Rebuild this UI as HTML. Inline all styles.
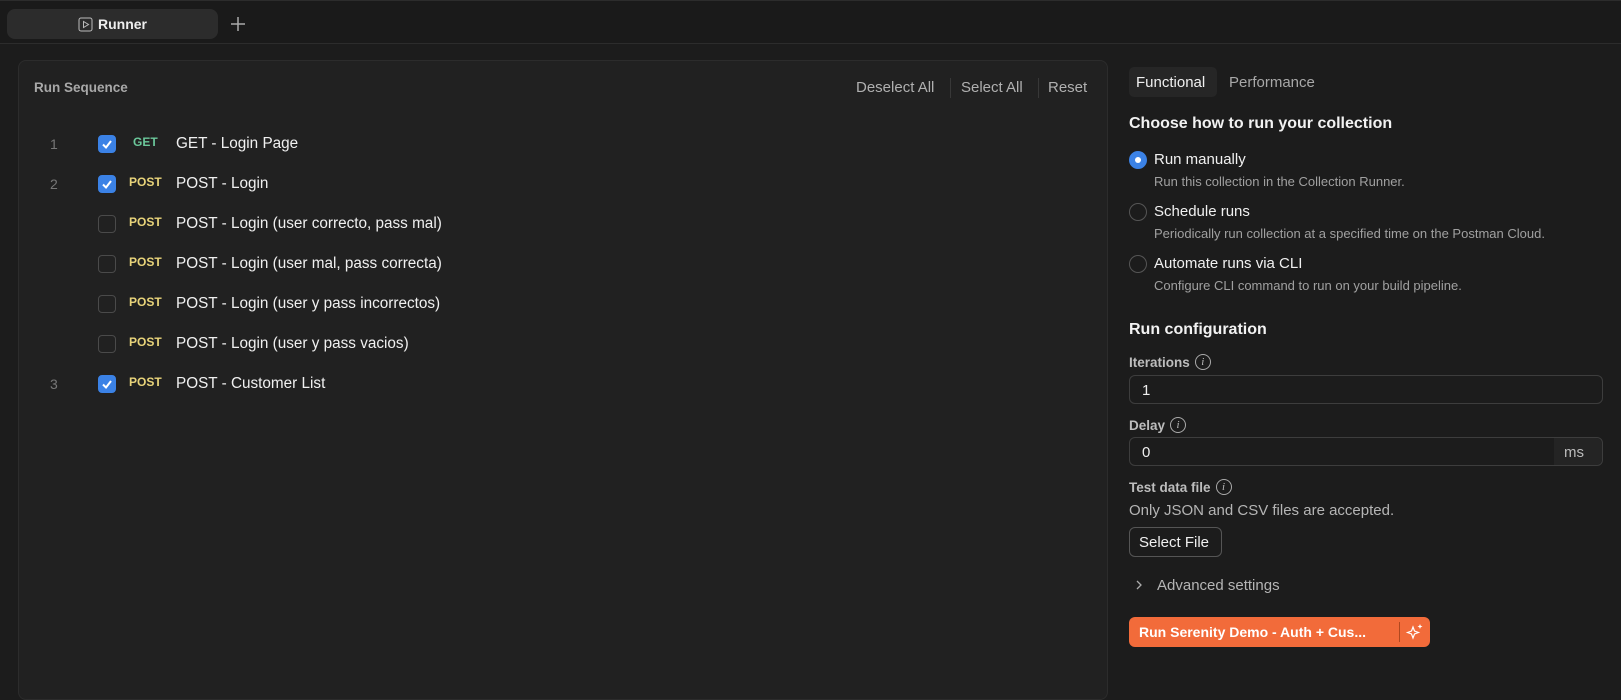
<!DOCTYPE html>
<html><head><meta charset="utf-8"><style>
*{box-sizing:border-box;margin:0;padding:0}
body{width:1621px;height:680px;background:#1c1c1c;font-family:"Liberation Sans",sans-serif;color:#e6e6e6;position:relative;overflow:hidden}
.abs{position:absolute;white-space:nowrap}
.top{position:absolute;left:0;top:0;width:1621px;height:44px;background:#1a1a1a;border-bottom:1px solid #2c2c2c;border-top:1px solid #2c2c2c}
.tab{position:absolute;left:7px;top:8px;width:211px;height:30px;background:#2c2c2c;border-radius:8px;font-size:14px;font-weight:bold;color:#eee;display:flex;align-items:center;justify-content:center;gap:5px}
.panel{position:absolute;left:18px;top:60px;width:1090px;height:640px;background:#212121;border:1px solid #2c2c2c;border-radius:8px}
.cb{position:absolute;left:98px;width:18px;height:18px;border-radius:4px;border:1px solid #4a4a4a}
.cb.on{background:#3b82e6;border-color:#3b82e6}
.m{position:absolute;left:129px;font-size:12px;font-weight:bold;color:#e9d47a}
.m.g{color:#6bc79a;left:133px}
.n{position:absolute;left:176px;font-size:15.3px;color:#f0f0f0}
.num{position:absolute;left:50px;font-size:14px;color:#777}
.rad{position:absolute;left:1129px;width:18px;height:18px;border-radius:50%;border:1px solid #555}
.rad.on{background:#3b82e6;border-color:#3b82e6}
.rad.on:after{content:"";position:absolute;left:5px;top:5px;width:6px;height:6px;border-radius:50%;background:#fff}
.rt{left:1154px;font-size:15px;color:#f0f0f0}
.rd{left:1154px;font-size:13px;color:#a0a0a0}
.lbl{left:1129px;font-size:13.5px;font-weight:bold;color:#bdbdbd;display:flex;align-items:center}
.inp{position:absolute;left:1129px;width:474px;height:29px;border:1px solid #3d3d3d;border-radius:6px;font-size:15px;padding:6px 12px;color:#eee}
.info{display:inline-block;width:16px;height:16px;border:1px solid #aaa;border-radius:50%;font-size:11px;text-align:center;line-height:14px;font-style:italic;font-family:"Liberation Serif",serif;margin-left:5px;color:#bbb;font-weight:normal}
</style></head><body>
<div class="top">
<div class="tab"><svg width="15" height="15" viewBox="0 0 15 15"><rect x="1" y="1" width="13" height="13" rx="2" fill="none" stroke="#bbb"/><path d="M5.5 4.5v6l5-3z" fill="none" stroke="#bbb"/></svg>Runner</div>
<svg class="abs" style="left:229px;top:14px" width="18" height="18" viewBox="0 0 18 18"><path d="M9 2v14M2 9h14" stroke="#aaa" stroke-width="1.5"/></svg>
</div>
<div class="panel"></div>
<div class="abs" style="left:34px;top:80px;font-size:13.5px;font-weight:bold;color:#a8a8a8">Run Sequence</div>
<div class="abs" style="left:856px;top:79px;font-size:15px;color:#b0b0b0">Deselect All</div>
<div class="abs" style="left:950px;top:78px;width:1px;height:20px;background:#383838"></div>
<div class="abs" style="left:961px;top:79px;font-size:15px;color:#b0b0b0">Select All</div>
<div class="abs" style="left:1038px;top:78px;width:1px;height:20px;background:#383838"></div>
<div class="abs" style="left:1048px;top:79px;font-size:15px;color:#b0b0b0">Reset</div>

<div class="num" style="top:136px">1</div><div class="cb on" style="top:135px"><svg width="16" height="16"><path d="M4 8.5l3 3 5-6.5" stroke="#fff" stroke-width="2" fill="none"/></svg></div><div class="m g" style="top:135px">GET</div><div class="n" style="top:135px">GET - Login Page</div>
<div class="num" style="top:176px">2</div><div class="cb on" style="top:175px"><svg width="16" height="16"><path d="M4 8.5l3 3 5-6.5" stroke="#fff" stroke-width="2" fill="none"/></svg></div><div class="m" style="top:175px">POST</div><div class="n" style="top:175px">POST - Login</div>
<div class="cb" style="top:215px"></div><div class="m" style="top:215px">POST</div><div class="n" style="top:215px">POST - Login (user correcto, pass mal)</div>
<div class="cb" style="top:255px"></div><div class="m" style="top:255px">POST</div><div class="n" style="top:255px">POST - Login (user mal, pass correcta)</div>
<div class="cb" style="top:295px"></div><div class="m" style="top:295px">POST</div><div class="n" style="top:295px">POST - Login (user y pass incorrectos)</div>
<div class="cb" style="top:335px"></div><div class="m" style="top:335px">POST</div><div class="n" style="top:335px">POST - Login (user y pass vacios)</div>
<div class="num" style="top:376px">3</div><div class="cb on" style="top:375px"><svg width="16" height="16"><path d="M4 8.5l3 3 5-6.5" stroke="#fff" stroke-width="2" fill="none"/></svg></div><div class="m" style="top:375px">POST</div><div class="n" style="top:375px">POST - Customer List</div>

<div class="abs" style="left:1129px;top:67px;width:88px;height:30px;background:#262626;border-radius:5px"></div>
<div class="abs" style="left:1136px;top:74px;font-size:15px;color:#f0f0f0">Functional</div>
<div class="abs" style="left:1229px;top:74px;font-size:15px;color:#a8a8a8">Performance</div>
<div class="abs" style="left:1129px;top:115px;font-size:16px;font-weight:bold;color:#f2f2f2">Choose how to run your collection</div>
<div class="rad on" style="top:151px"></div><div class="abs rt" style="top:151px">Run manually</div><div class="abs rd" style="top:174px">Run this collection in the Collection Runner.</div>
<div class="rad" style="top:203px"></div><div class="abs rt" style="top:203px">Schedule runs</div><div class="abs rd" style="top:226px">Periodically run collection at a specified time on the Postman Cloud.</div>
<div class="rad" style="top:255px"></div><div class="abs rt" style="top:255px">Automate runs via CLI</div><div class="abs rd" style="top:278px">Configure CLI command to run on your build pipeline.</div>
<div class="abs" style="left:1129px;top:321px;font-size:16px;font-weight:bold;color:#f2f2f2">Run configuration</div>
<div class="abs lbl" style="top:354px">Iterations<span class="info">i</span></div>
<div class="inp" style="top:375px">1</div>
<div class="abs lbl" style="top:417px">Delay<span class="info">i</span></div>
<div class="inp" style="top:437px">0<span style="position:absolute;right:0;top:0;width:48px;height:27px;background:#242424;border-radius:0 6px 6px 0;color:#bbb;padding:6px 10px">ms</span></div>
<div class="abs lbl" style="top:479px">Test data file<span class="info">i</span></div>
<div class="abs" style="left:1129px;top:502px;font-size:15px;color:#b5b5b5">Only JSON and CSV files are accepted.</div>
<div class="abs" style="left:1129px;top:527px;width:93px;height:30px;border:1px solid #555;border-radius:6px;font-size:15px;color:#f0f0f0;padding:6px 9px">Select File</div>
<svg class="abs" style="left:1134px;top:579px" width="10" height="12"><path d="M3 2l4 4-4 4" stroke="#aaa" stroke-width="1.3" fill="none"/></svg>
<div class="abs" style="left:1157px;top:577px;font-size:15px;color:#b5b5b5">Advanced settings</div>
<div class="abs" style="left:1129px;top:617px;width:301px;height:30px;background:#f26b3a;border-radius:6px"></div>
<div class="abs" style="left:1139px;top:624px;font-size:14px;font-weight:bold;color:#fff">Run Serenity Demo - Auth + Cus...</div>
<div class="abs" style="left:1399px;top:622px;width:1px;height:20px;background:#b0481f"></div>
<svg class="abs" style="left:1405px;top:622px" width="20" height="20" viewBox="0 0 20 20"><path d="M8 5l1.5 4 4 1.5-4 1.5L8 16l-1.5-4-4-1.5 4-1.5z" fill="none" stroke="#fff" stroke-width="1.2"/><path d="M15 2l.7 1.8 1.8.7-1.8.7L15 7l-.7-1.8-1.8-.7 1.8-.7z" fill="#fff"/></svg>
</body></html>
